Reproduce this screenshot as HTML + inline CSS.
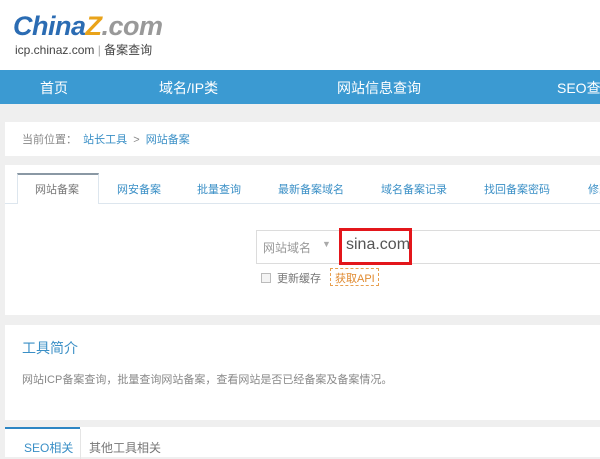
<!DOCTYPE html>
<html><head><meta charset="utf-8"><style>
*{margin:0;padding:0;box-sizing:border-box}
body{width:600px;height:450px;overflow:hidden;background:#efefef;font-family:"Liberation Sans","Noto Sans CJK SC",sans-serif;position:relative}
.a{position:absolute;white-space:nowrap}
</style></head><body>
<div class="a" style="left:0;top:0;width:600px;height:70px;background:#fff"></div>
<div class="a" style="left:13px;top:11px;font:italic bold 27px 'Liberation Sans',sans-serif;color:#2b6cb3;letter-spacing:-0.5px">China<span style="color:#e9a31a">Z</span><span style="color:#999">.com</span></div>
<div class="a" style="left:15px;top:41px;font-size:12px;color:#444">icp.chinaz.com <span style="color:#aaa">|</span> 备案查询</div>
<div class="a" style="left:0;top:70px;width:600px;height:34px;background:#3b9ad2"></div>
<div class="a" style="left:40px;top:78px;font-size:14px;color:#fff">首页</div>
<div class="a" style="left:159px;top:78px;font-size:14px;color:#fff">域名/IP类</div>
<div class="a" style="left:337px;top:78px;font-size:14px;color:#fff">网站信息查询</div>
<div class="a" style="left:557px;top:78px;font-size:14px;color:#fff">SEO查询</div>
<div class="a" style="left:5px;top:122px;width:600px;height:34px;background:#fff"></div>
<div class="a" style="left:22px;top:131px;font-size:11px;color:#888">当前位置：&nbsp;&nbsp;<span style="color:#3a8fc6">站长工具</span>&nbsp;&nbsp;&gt;&nbsp;&nbsp;<span style="color:#3a8fc6">网站备案</span></div>
<div class="a" style="left:5px;top:165px;width:600px;height:150px;background:#fff"></div>
<div class="a" style="left:5px;top:203px;width:600px;height:1px;background:#dde6ee"></div>
<div class="a" style="left:17px;top:173px;width:82px;height:31px;background:#fff;border-top:2px solid #8a98a4;border-left:1px solid #dde6ee;border-right:1px solid #dde6ee"></div>
<div class="a" style="left:35px;top:181px;font-size:11px;color:#777">网站备案</div>
<div class="a" style="left:117px;top:181px;font-size:11px;color:#3a8fc6">网安备案</div>
<div class="a" style="left:197px;top:181px;font-size:11px;color:#3a8fc6">批量查询</div>
<div class="a" style="left:278px;top:181px;font-size:11px;color:#3a8fc6">最新备案域名</div>
<div class="a" style="left:381px;top:181px;font-size:11px;color:#3a8fc6">域名备案记录</div>
<div class="a" style="left:484px;top:181px;font-size:11px;color:#3a8fc6">找回备案密码</div>
<div class="a" style="left:588px;top:181px;font-size:11px;color:#3a8fc6">修改</div>
<div class="a" style="left:256px;top:230px;width:350px;height:34px;border:1px solid #dcdcdc;background:#fff"></div>
<div class="a" style="left:263px;top:239px;font-size:12px;color:#999">网站域名</div>
<div class="a" style="left:322px;top:239px;font-size:9px;color:#aaa">▼</div>
<div class="a" style="left:339px;top:228px;width:73px;height:37px;border:3px solid #e3161b"></div>
<div class="a" style="left:346px;top:236px;font-size:16px;color:#555">sina.com</div>
<div class="a" style="left:261px;top:273px;width:10px;height:10px;border:1px solid #bbb;background:#f4f4f4"></div>
<div class="a" style="left:277px;top:270px;font-size:11px;color:#777">更新缓存</div>
<div class="a" style="left:330px;top:268px;width:49px;height:18px;border:1px dashed #e8a050"></div>
<div class="a" style="left:335px;top:270px;font-size:11px;color:#e08a30">获取API</div>
<div class="a" style="left:5px;top:325px;width:600px;height:95px;background:#fff"></div>
<div class="a" style="left:22px;top:338px;font-size:14px;color:#3a8fc6">工具简介</div>
<div class="a" style="left:22px;top:371px;font-size:11px;color:#888">网站ICP备案查询，批量查询网站备案，查看网站是否已经备案及备案情况。</div>
<div class="a" style="left:5px;top:427px;width:600px;height:30px;background:#fff"></div>
<div class="a" style="left:5px;top:427px;width:75px;height:2px;background:#2d86c4"></div>
<div class="a" style="left:80px;top:429px;width:1px;height:30px;background:#e5e5e5"></div>
<div class="a" style="left:24px;top:439px;font-size:12px;color:#3a8fc6">SEO相关</div>
<div class="a" style="left:89px;top:439px;font-size:12px;color:#777">其他工具相关</div>
</body></html>
